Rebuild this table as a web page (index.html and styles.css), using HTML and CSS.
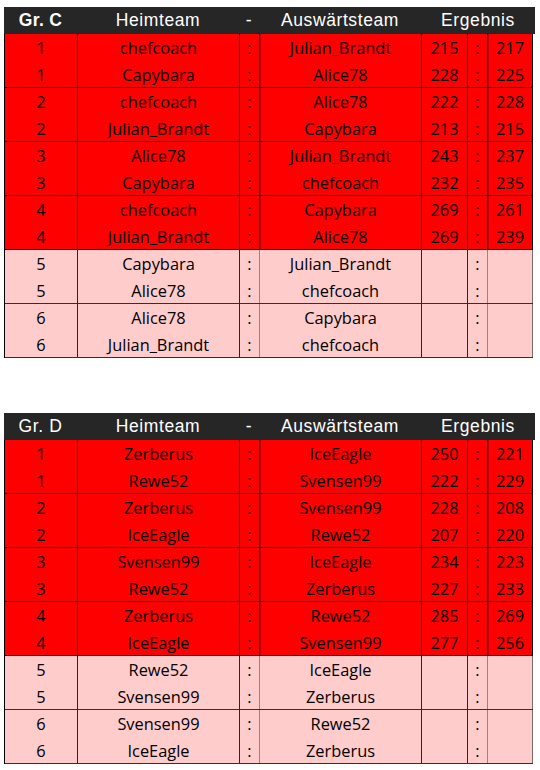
FILE: index.html
```html
<!DOCTYPE html>
<html lang="de">
<head>
<meta charset="utf-8">
<title>Spielplan</title>
<link rel="stylesheet" href="styles.css">
</head>
<body>
<div class="page">

  <section class="group">
    <div class="head">
      <div class="h-gr strong">Gr. C</div>
      <div>Heimteam</div>
      <div>-</div>
      <div>Auswärtsteam</div>
      <div>Ergebnis</div>
    </div>
    <div class="body">
      <div class="pair played">
        <div class="row"><div class="c">1</div><div class="c">chefcoach</div><div class="c sep">:</div><div class="c after">Julian_Brandt</div><div class="c">215</div><div class="c sep">:</div><div class="c after last">217</div></div>
        <div class="row"><div class="c">1</div><div class="c">Capybara</div><div class="c sep">:</div><div class="c after">Alice78</div><div class="c">228</div><div class="c sep">:</div><div class="c after last">225</div></div>
      </div>
      <div class="pair played">
        <div class="row"><div class="c">2</div><div class="c">chefcoach</div><div class="c sep">:</div><div class="c after">Alice78</div><div class="c">222</div><div class="c sep">:</div><div class="c after last">228</div></div>
        <div class="row"><div class="c">2</div><div class="c">Julian_Brandt</div><div class="c sep">:</div><div class="c after">Capybara</div><div class="c">213</div><div class="c sep">:</div><div class="c after last">215</div></div>
      </div>
      <div class="pair played">
        <div class="row"><div class="c">3</div><div class="c">Alice78</div><div class="c sep">:</div><div class="c after">Julian_Brandt</div><div class="c">243</div><div class="c sep">:</div><div class="c after last">237</div></div>
        <div class="row"><div class="c">3</div><div class="c">Capybara</div><div class="c sep">:</div><div class="c after">chefcoach</div><div class="c">232</div><div class="c sep">:</div><div class="c after last">235</div></div>
      </div>
      <div class="pair played">
        <div class="row"><div class="c">4</div><div class="c">chefcoach</div><div class="c sep">:</div><div class="c after">Capybara</div><div class="c">269</div><div class="c sep">:</div><div class="c after last">261</div></div>
        <div class="row"><div class="c">4</div><div class="c">Julian_Brandt</div><div class="c sep">:</div><div class="c after">Alice78</div><div class="c">269</div><div class="c sep">:</div><div class="c after last">239</div></div>
      </div>
      <div class="pair open">
        <div class="row"><div class="c">5</div><div class="c">Capybara</div><div class="c sep">:</div><div class="c after">Julian_Brandt</div><div class="c"></div><div class="c sep">:</div><div class="c after last"></div></div>
        <div class="row"><div class="c">5</div><div class="c">Alice78</div><div class="c sep">:</div><div class="c after">chefcoach</div><div class="c"></div><div class="c sep">:</div><div class="c after last"></div></div>
      </div>
      <div class="pair open">
        <div class="row"><div class="c">6</div><div class="c">Alice78</div><div class="c sep">:</div><div class="c after">Capybara</div><div class="c"></div><div class="c sep">:</div><div class="c after last"></div></div>
        <div class="row"><div class="c">6</div><div class="c">Julian_Brandt</div><div class="c sep">:</div><div class="c after">chefcoach</div><div class="c"></div><div class="c sep">:</div><div class="c after last"></div></div>
      </div>
    </div>
  </section>

  <section class="group">
    <div class="head">
      <div class="h-gr">Gr. D</div>
      <div>Heimteam</div>
      <div>-</div>
      <div>Auswärtsteam</div>
      <div>Ergebnis</div>
    </div>
    <div class="body">
      <div class="pair played">
        <div class="row"><div class="c">1</div><div class="c">Zerberus</div><div class="c sep">:</div><div class="c after">IceEagle</div><div class="c">250</div><div class="c sep">:</div><div class="c after last">221</div></div>
        <div class="row"><div class="c">1</div><div class="c">Rewe52</div><div class="c sep">:</div><div class="c after">Svensen99</div><div class="c">222</div><div class="c sep">:</div><div class="c after last">229</div></div>
      </div>
      <div class="pair played">
        <div class="row"><div class="c">2</div><div class="c">Zerberus</div><div class="c sep">:</div><div class="c after">Svensen99</div><div class="c">228</div><div class="c sep">:</div><div class="c after last">208</div></div>
        <div class="row"><div class="c">2</div><div class="c">IceEagle</div><div class="c sep">:</div><div class="c after">Rewe52</div><div class="c">207</div><div class="c sep">:</div><div class="c after last">220</div></div>
      </div>
      <div class="pair played">
        <div class="row"><div class="c">3</div><div class="c">Svensen99</div><div class="c sep">:</div><div class="c after">IceEagle</div><div class="c">234</div><div class="c sep">:</div><div class="c after last">223</div></div>
        <div class="row"><div class="c">3</div><div class="c">Rewe52</div><div class="c sep">:</div><div class="c after">Zerberus</div><div class="c">227</div><div class="c sep">:</div><div class="c after last">233</div></div>
      </div>
      <div class="pair played">
        <div class="row"><div class="c">4</div><div class="c">Zerberus</div><div class="c sep">:</div><div class="c after">Rewe52</div><div class="c">285</div><div class="c sep">:</div><div class="c after last">269</div></div>
        <div class="row"><div class="c">4</div><div class="c">IceEagle</div><div class="c sep">:</div><div class="c after">Svensen99</div><div class="c">277</div><div class="c sep">:</div><div class="c after last">256</div></div>
      </div>
      <div class="pair open">
        <div class="row"><div class="c">5</div><div class="c">Rewe52</div><div class="c sep">:</div><div class="c after">IceEagle</div><div class="c"></div><div class="c sep">:</div><div class="c after last"></div></div>
        <div class="row"><div class="c">5</div><div class="c">Svensen99</div><div class="c sep">:</div><div class="c after">Zerberus</div><div class="c"></div><div class="c sep">:</div><div class="c after last"></div></div>
      </div>
      <div class="pair open">
        <div class="row"><div class="c">6</div><div class="c">Svensen99</div><div class="c sep">:</div><div class="c after">Rewe52</div><div class="c"></div><div class="c sep">:</div><div class="c after last"></div></div>
        <div class="row"><div class="c">6</div><div class="c">IceEagle</div><div class="c sep">:</div><div class="c after">Zerberus</div><div class="c"></div><div class="c sep">:</div><div class="c after last"></div></div>
      </div>
    </div>
  </section>

</div>
</body>
</html>
```

FILE: styles.css
```css
html, body {
  margin: 0;
  padding: 0;
  background: #ffffff;
}

.page {
  display: flex;
  flex-direction: column;
  gap: 55px;
  padding: 7px 0 0 4px;
}

.group {
  width: 531px;
}

.head {
  display: grid;
  grid-template-columns: 73px 162px 20px 162px 114px;
  height: 27px;
  align-items: center;
  background: #262626;
  color: #ffffff;
  font-family: "Liberation Sans", Arial, sans-serif;
  font-size: 17.5px;
  letter-spacing: 0.6px;
  text-align: center;
}

.head .strong {
  font-weight: bold;
  letter-spacing: 0.3px;
}

.body {
  width: 528px;
  border-left: 1px solid #000000;
  font-family: "Open Sans", "Noto Sans", sans-serif;
  font-size: 16.4px;
  color: #000000;
}

.pair {
  border-bottom: 1px solid #000000;
}

.pair.played {
  background: #ff0000;
}

.pair.open {
  background: #ffcccc;
  border-bottom-color: #3e2c2c;
}

.row {
  display: grid;
  grid-template-columns: 73px 162px 20px 162px 46px 20px 45px;
  height: 27px;
}

.pair .row:last-child {
  height: 26px;
}

.c {
  box-sizing: border-box;
  border-right: 1px solid #000000;
  text-align: center;
  line-height: 27px;
  white-space: nowrap;
  overflow: hidden;
}

.played .after {
  box-shadow: inset 1px 0 0 #b80000;
}

.open .c {
  border-right-color: #2f2424;
}

.open .sep {
  border-right-color: #9c8282;
}

.open .last {
  border-right-color: #7d6a6a;
}
```
